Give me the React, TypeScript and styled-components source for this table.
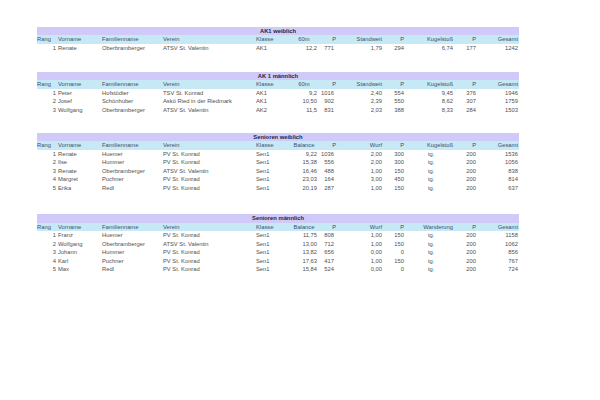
import React from "react";
import styled, { createGlobalStyle } from "styled-components";

const GlobalStyle = createGlobalStyle`
  html, body {
    margin: 0;
    padding: 0;
    background: #ffffff;
  }
  body {
    font-family: "Liberation Sans", Arial, sans-serif;
  }
`;

type Align = "left" | "right" | "center";

type ColSpec = {
  head: Align;
  headPad: number;
  value: Align;
  valuePad: number;
};

// widths follow the spreadsheet columns
const COLUMNS = "20px 44px 61px 93px 33px 32px 17px 48px 21px 50px 23px 40px";

const SPECS: ColSpec[] = [
  { head: "left", headPad: 0, value: "right", valuePad: 1 },
  { head: "left", headPad: 1, value: "left", valuePad: 1 },
  { head: "left", headPad: 1, value: "left", valuePad: 1 },
  { head: "left", headPad: 1, value: "left", valuePad: 1 },
  { head: "left", headPad: 1, value: "left", valuePad: 1 },
  { head: "center", headPad: 0, value: "right", valuePad: 3 },
  { head: "right", headPad: 1, value: "right", valuePad: 3 },
  { head: "right", headPad: 3, value: "right", valuePad: 3 },
  { head: "right", headPad: 2, value: "right", valuePad: 2 },
  { head: "right", headPad: 3, value: "right", valuePad: 3 },
  { head: "right", headPad: 3, value: "right", valuePad: 3 },
  { head: "right", headPad: 1, value: "right", valuePad: 1 },
];

type SectionData = {
  title: string;
  gap: number;
  head: string[];
  rows: string[][];
};

const base = ["Rang", "Vorname", "Familienname", "Verein", "Klasse"];

const SECTIONS: SectionData[] = [
  {
    title: "AK1 weiblich",
    gap: 0,
    head: [...base, "60m", "P", "Standweit", "P", "Kugelstoß", "P", "Gesamt"],
    rows: [
      ["1", "Renate", "Oberbramberger", "ATSV St. Valentin", "AK1", "12,2", "771", "1,79", "294", "6,74", "177", "1242"],
    ],
  },
  {
    title: "AK 1 männlich",
    gap: 19.5,
    head: [...base, "60m", "P", "Standweit", "P", "Kugelstoß", "P", "Gesamt"],
    rows: [
      ["1", "Peter", "Hofstödter", "TSV St. Konrad", "AK1", "9,2", "1016", "2,40", "554", "9,45", "376", "1946"],
      ["2", "Josef", "Schönhuber", "Askö Ried in der Riedmark", "AK1", "10,50", "902", "2,39", "550", "8,62", "307", "1759"],
      ["3", "Wolfgang", "Oberbramberger", "ATSV St. Valentin", "AK2", "11,5", "831", "2,03", "388", "8,33", "284", "1503"],
    ],
  },
  {
    title: "Senioren weiblich",
    gap: 18.5,
    head: [...base, "Balance", "P", "Wurf", "P", "Kugelstoß", "P", "Gesamt"],
    rows: [
      ["1", "Renate", "Huemer", "PV St. Konrad", "Sen1", "9,22", "1036", "2,00", "300", "tg.", "200", "1536"],
      ["2", "Ilse", "Hummer", "PV St. Konrad", "Sen1", "15,38", "556", "2,00", "300", "tg.", "200", "1056"],
      ["3", "Renate", "Oberbramberger", "ATSV St. Valentin", "Sen1", "16,46", "488", "1,00", "150", "tg.", "200", "838"],
      ["4", "Margret", "Puchner", "PV St. Konrad", "Sen1", "23,03", "164", "3,00", "450", "tg.", "200", "814"],
      ["5", "Erika", "Redl", "PV St. Konrad", "Sen1", "20,19", "287", "1,00", "150", "tg.", "200", "637"],
    ],
  },
  {
    title: "Senioren männlich",
    gap: 22,
    head: [...base, "Balance", "P", "Wurf", "P", "Wanderung", "P", "Gesamt"],
    rows: [
      ["1", "Franz", "Huemer", "PV St. Konrad", "Sen1", "11,75", "808", "1,00", "150", "tg.", "200", "1158"],
      ["2", "Wolfgang", "Oberbramberger", "ATSV St. Valentin", "Sen1", "13,00", "712", "1,00", "150", "tg.", "200", "1062"],
      ["3", "Johann", "Hummer", "PV St. Konrad", "Sen1", "13,82", "656", "0,00", "0", "tg.", "200", "856"],
      ["4", "Karl", "Puchner", "PV St. Konrad", "Sen1", "17,63", "417", "1,00", "150", "tg.", "200", "767"],
      ["5", "Max", "Redl", "PV St. Konrad", "Sen1", "15,84", "524", "0,00", "0", "tg.", "200", "724"],
    ],
  },
];

const Sheet = styled.div`
  width: 600px;
  height: 400px;
  padding: 26.75px 0 0 37px;
  box-sizing: border-box;
  display: flex;
  flex-direction: column;
`;

const Section = styled.section<{ $gap: number }>`
  width: 482px;
  margin-top: ${(p) => p.$gap}px;
  display: flex;
  flex-direction: column;
`;

const TitleBar = styled.div`
  height: 8.5px;
  line-height: 8.5px;
  background: #cfcaf7;
  color: #1d1f45;
  font-size: 5.8px;
  font-weight: 700;
  text-align: center;
`;

const GridRow = styled.div<{ $head?: boolean }>`
  display: grid;
  grid-template-columns: ${COLUMNS};
  height: 8.5px;
  line-height: 8.5px;
  font-size: 5.8px;
  background: ${(p) => (p.$head ? "#c7e9f6" : "transparent")};
  color: ${(p) => (p.$head ? "#3d4f6e" : "#505050")};
`;

const Cell = styled.div<{ $align: Align; $pad: number }>`
  text-align: ${(p) => p.$align};
  padding-left: ${(p) => (p.$align === "left" ? p.$pad : 0)}px;
  padding-right: ${(p) => (p.$align === "right" ? p.$pad : 0)}px;
  white-space: nowrap;
  overflow: visible;
`;

const isText = (v: string) => /[a-zäöüß]/i.test(v);

const ResultTable = ({ data }: { data: SectionData }) => (
  <Section $gap={data.gap}>
    <TitleBar>{data.title}</TitleBar>
    <GridRow $head>
      {data.head.map((h, i) => (
        <Cell key={i} $align={SPECS[i].head} $pad={SPECS[i].headPad}>
          {h}
        </Cell>
      ))}
    </GridRow>
    {data.rows.map((row, r) => (
      <GridRow key={r}>
        {row.map((v, i) => {
          // text in a number column (e.g. "tg.") sits left like in Excel
          const textInNum = i >= 5 && isText(v);
          return (
            <Cell
              key={i}
              $align={textInNum ? "left" : SPECS[i].value}
              $pad={textInNum ? 22 : SPECS[i].valuePad}
            >
              {v}
            </Cell>
          );
        })}
      </GridRow>
    ))}
  </Section>
);

export default function App() {
  return (
    <>
      <GlobalStyle />
      <Sheet>
        {SECTIONS.map((s) => (
          <ResultTable key={s.title} data={s} />
        ))}
      </Sheet>
    </>
  );
}
